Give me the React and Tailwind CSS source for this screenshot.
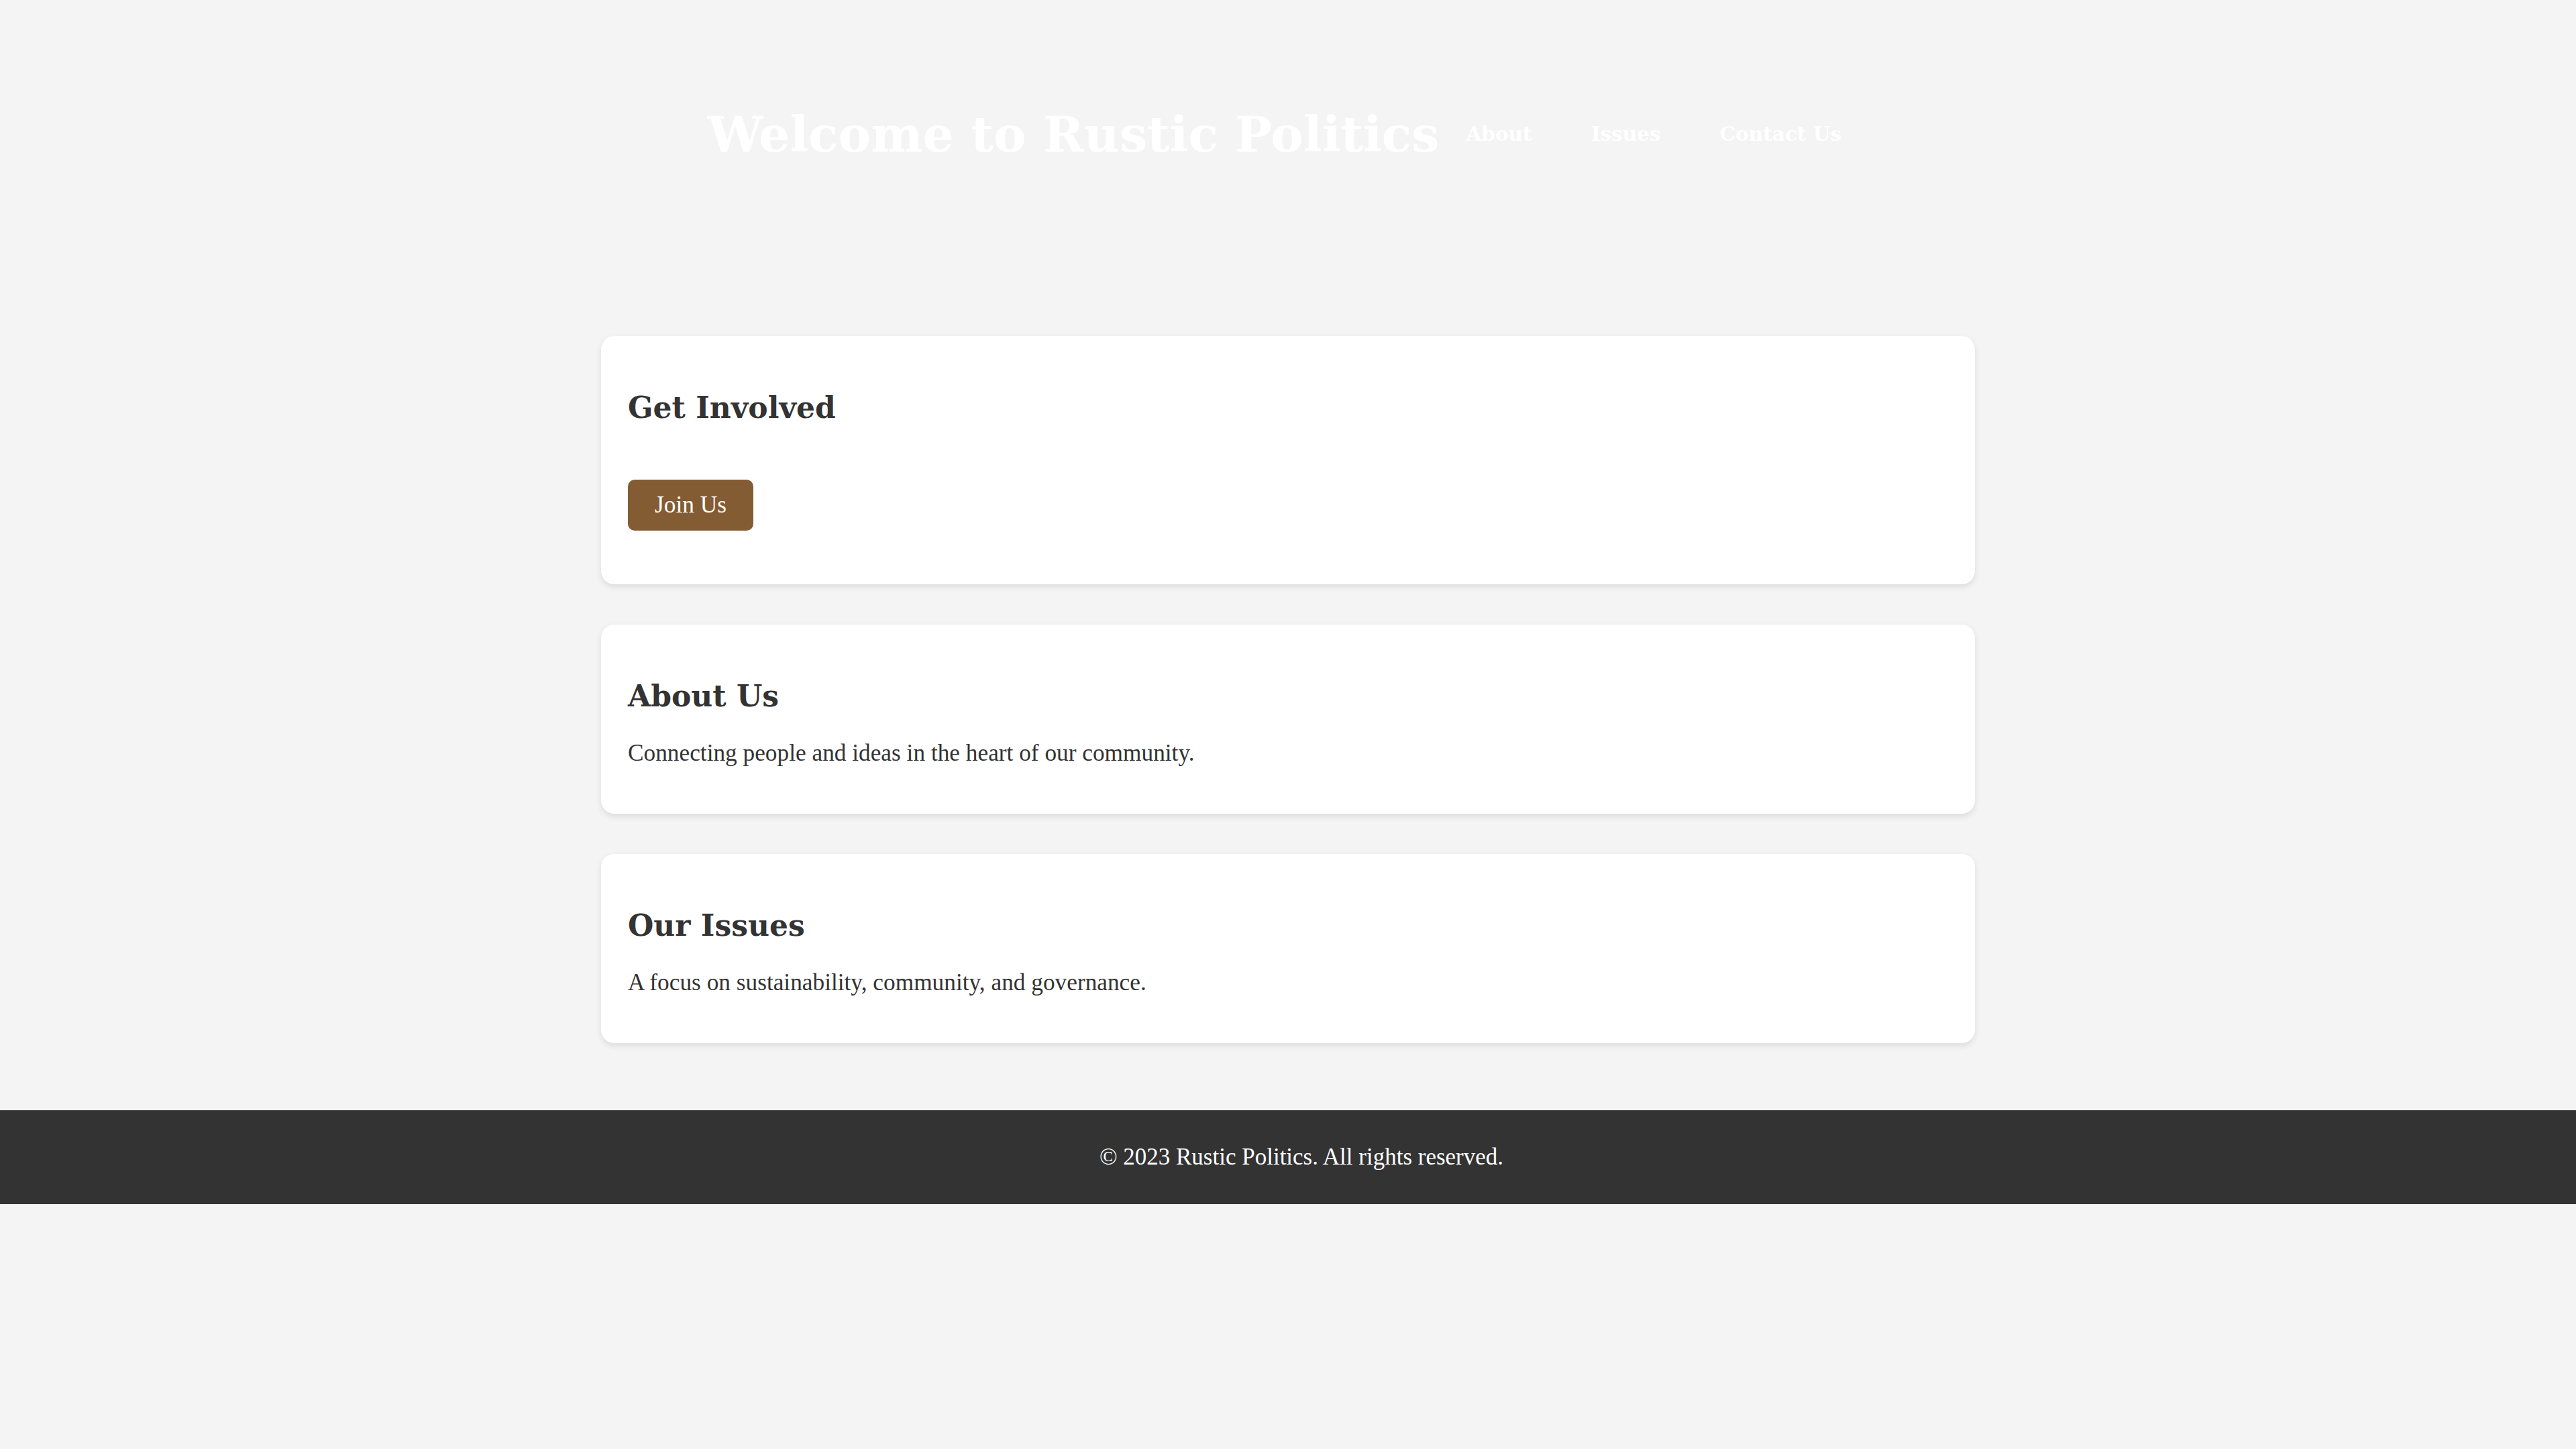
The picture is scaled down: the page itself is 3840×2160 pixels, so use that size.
const serif = "font-['Liberation_Serif','Times_New_Roman',serif]";
const boldSerif = "font-['DejaVu_Serif',Georgia,serif] font-bold";

const links = ['About', 'Issues', 'Contact Us'];

function Card({ title, children }) {
    return (
        <section className="rounded-[20px] bg-white px-[40px] pb-[40px] pt-[80px] shadow-[0_4px_10px_rgba(0,0,0,0.1)]">
            <h2 className={`${boldSerif} text-[44px] leading-[54px] text-[#333]`}>{title}</h2>
            {children}
        </section>
    );
}

export default function App() {
    return (
        <div className={`${serif} min-h-screen bg-[#f4f4f4] text-[#333]`}>
            <header className="flex h-[400px] items-center justify-center text-white">
                <h1 className={`${boldSerif} text-[73px] leading-[90px]`}>Welcome to Rustic Politics</h1>
                <nav className="flex gap-[8px]">
                    {links.map((label) => (
                        <a key={label} href="#" className={`${boldSerif} px-[40px] text-[29.5px] text-white`}>
                            {label}
                        </a>
                    ))}
                </nav>
            </header>

            <main className="mx-auto flex w-[2048px] flex-col gap-[60px] pb-[100px] pt-[101px]">
                <Card title="Get Involved">
                    <button type="button" className="mb-[40px] mt-[80px] flex h-[76px] items-center rounded-[10px] bg-[#845c33] px-[40px] text-[35.3px] text-white">
                        Join Us
                    </button>
                </Card>
                <Card title="About Us">
                    <p className="mb-[32px] mt-[40px] text-[35.3px] leading-[36px]">Connecting people and ideas in the heart of our community.</p>
                </Card>
                <Card title="Our Issues">
                    <p className="mb-[32px] mt-[40px] text-[35.3px] leading-[36px]">A focus on sustainability, community, and governance.</p>
                </Card>
            </main>

            <footer className="flex h-[140px] items-center justify-center bg-[#333] pl-[40px] text-[35px] text-white">
                © 2023 Rustic Politics. All rights reserved.
            </footer>
        </div>
    );
}
